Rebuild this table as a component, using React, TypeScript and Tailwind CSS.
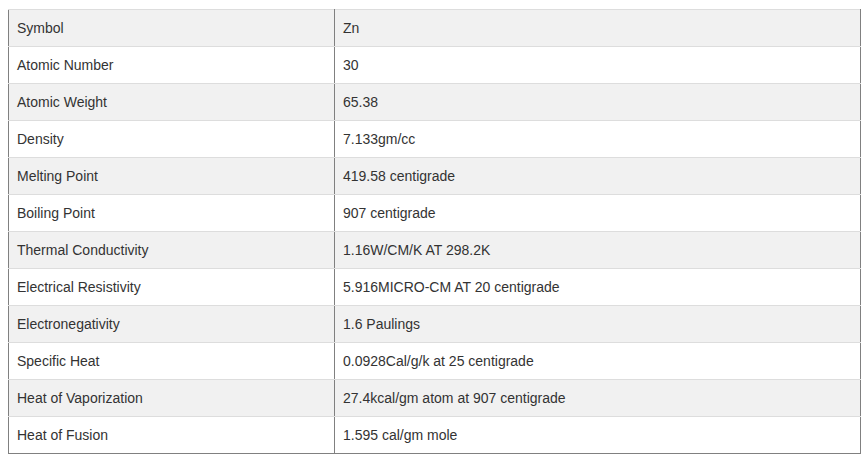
import React from 'react';

const rows: [string, string][] = [
  ['Symbol', 'Zn'],
  ['Atomic Number', '30'],
  ['Atomic Weight', '65.38'],
  ['Density', '7.133gm/cc'],
  ['Melting Point', '419.58 centigrade'],
  ['Boiling Point', '907 centigrade'],
  ['Thermal Conductivity', '1.16W/CM/K AT 298.2K'],
  ['Electrical Resistivity', '5.916MICRO-CM AT 20 centigrade'],
  ['Electronegativity', '1.6 Paulings'],
  ['Specific Heat', '0.0928Cal/g/k at 25 centigrade'],
  ['Heat of Vaporization', '27.4kcal/gm atom at 907 centigrade'],
  ['Heat of Fusion', '1.595 cal/gm mole'],
];

const App = () => {
  return (
    <div className="bg-white min-h-[460px] pt-[9px] pl-[8px] font-['Liberation_Sans',Arial,sans-serif] text-[14px] leading-[20px] text-[#333]">
      <table className="w-[853px] table-fixed border-collapse">
        <colgroup>
          <col className="w-[326px]" />
          <col />
        </colgroup>
        <tbody>
          {rows.map(([label, value], i) => {
            const last = i === rows.length - 1;
            const cell = `px-2 py-2 text-left align-middle border-x border-x-[#808080] border-t border-t-[#dddddd] ${
              last ? 'border-b border-b-[#808080]' : 'border-b border-b-[#dddddd]'
            }`;
            return (
              <tr key={label} className={i % 2 === 0 ? 'bg-[#f1f1f1]' : 'bg-white'}>
                <td className={cell}>{label}</td>
                <td className={cell}>{value}</td>
              </tr>
            );
          })}
        </tbody>
      </table>
    </div>
  );
};

export default App;
